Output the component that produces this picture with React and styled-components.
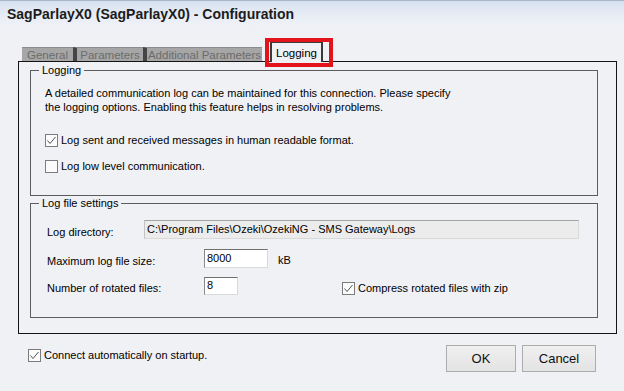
import React from 'react'
import styled, { createGlobalStyle } from 'styled-components'

const Global = createGlobalStyle`
  html, body { margin: 0; padding: 0; background: #f0f1f5; }
  body { font-family: "Liberation Sans", Arial, sans-serif; }
`;

const Window = styled.div`
  width: 624px;
  height: 391px;
  box-sizing: border-box;
  display: flex;
  flex-direction: column;
  background: #f0f1f5;
  font-family: "Liberation Sans", Arial, sans-serif;
  font-size: 11px;
  color: #000;
  overflow: hidden;
`;

const TitleBar = styled.div`
  height: 36px;
  box-sizing: border-box;
  padding: 5px 7px 0;
  border-top: 1px solid #a7b6ca;
  background: linear-gradient(#d5e0ef 0px, #e1e8f3 8px, #edf0f6 22px, #f0f1f5 34px);
  font-size: 14px;
  font-weight: bold;
  color: #1c1c1c;
  white-space: nowrap;
`;

const Client = styled.div`
  flex: 1;
  display: flex;
  flex-direction: column;
  padding: 0 7px 0 18px;
`;

const TabStrip = styled.div`
  height: 26px;
  display: flex;
  align-items: flex-end;
  padding-left: 4px;
  margin-bottom: -1px;
  position: relative;
  z-index: 1;
`;

const Tab = styled.div`
  width: ${p => p.$width}px;
  height: ${p => (p.$active ? '19px' : '13px')};
  box-sizing: content-box;
  margin-bottom: ${p => (p.$active ? '0' : '1px')};
  display: flex;
  align-items: center;
  justify-content: center;
  font-size: 11.5px;
  white-space: nowrap;
  position: relative;
  background: ${p => (p.$active ? '#f0f1f5' : '#a6a6a6')};
  color: ${p => (p.$active ? '#000' : '#6c6c6c')};
  border-top: 1px solid ${p => (p.$active ? '#3a3a3a' : '#8c8c8c')};
  border-left: ${p => (p.$active ? '2px solid #3a3a3a' : p.$first ? '0' : '4px solid #454545')};
  border-right: ${p => (p.$active ? '2px solid #3a3a3a' : '0')};
  margin-left: ${p => (p.$active ? '8px' : '0')};

  ${p => p.$highlight && `
    &::after {
      content: '';
      position: absolute;
      left: -7px;
      right: -12px;
      top: -5px;
      bottom: -5px;
      border: 4px solid #e3131c;
      pointer-events: none;
    }
  `}
`;

const Panel = styled.div`
  height: 273px;
  box-sizing: border-box;
  border: 1px solid #141414;
  padding: 8px 18px 0 11px;
  display: flex;
  flex-direction: column;
  gap: 7px;
`;

const Group = styled.div`
  height: ${p => p.$height}px;
  box-sizing: border-box;
  border: 1px solid #5c5c5c;
  position: relative;
  padding: ${p => p.$pad};
`;

const Legend = styled.span`
  position: absolute;
  top: -8px;
  left: 8px;
  padding: 0 3px;
  background: #f0f1f5;
  line-height: 14px;
`;

const Text = styled.p`
  margin: 0;
  line-height: 14px;
`;

const CheckRow = styled.label`
  display: flex;
  align-items: center;
  gap: 3px;
  margin-top: ${p => p.$top || 0}px;
  margin-left: ${p => p.$left || 0}px;
  padding-top: ${p => p.$drop || 0}px;
  line-height: 13px;
  white-space: nowrap;
`;

const Box = styled.span`
  width: 13px;
  height: 13px;
  box-sizing: border-box;
  border: 1px solid #7c7c7c;
  background: #fbfbfb;
  display: flex;
  flex-shrink: 0;
`;

const FieldRow = styled.div`
  display: flex;
  align-items: center;
  margin-top: ${p => p.$top || 0}px;
`;

const Label = styled.span`
  width: ${p => p.$width}px;
  padding-top: 5px;
  flex-shrink: 0;
`;

const Input = styled.div`
  width: ${p => p.$width}px;
  height: ${p => p.$height || 19}px;
  box-sizing: border-box;
  padding: 0 2px 2px;
  display: flex;
  align-items: center;
  background: ${p => (p.$disabled ? '#ececec' : '#fff')};
  border: 1px solid #d9d9d9;
  border-top-color: ${p => (p.$disabled ? '#a4a4a4' : '#6f6f6f')};
  border-left-color: ${p => (p.$disabled ? '#c4c4c4' : '#8a8a8a')};
  white-space: nowrap;
  font-size: 11px;
  flex-shrink: 0;
`;

const Unit = styled.span`
  margin-left: 10px;
  padding-top: 3px;
`;

const Footer = styled.div`
  display: flex;
  align-items: flex-start;
  padding: 11px 21px 0 10px;
`;

const Buttons = styled.div`
  margin-left: auto;
  display: flex;
  gap: 6px;
`;

const Button = styled.button`
  width: ${p => p.$width}px;
  height: 27px;
  box-sizing: border-box;
  border: 1px solid #acacac;
  background: linear-gradient(#f0f0f0, #e3e3e3);
  font-family: "Liberation Sans", Arial, sans-serif;
  font-size: 13px;
  color: #111;
  padding: 0;
`;

const Check = ({ checked }) => (
  <Box>
    {checked && (
      <svg width="11" height="11" viewBox="0 0 11 11">
        <polyline points="1.5,5.5 4,8.5 9.5,2" fill="none" stroke="#555" strokeWidth="1" />
      </svg>
    )}
  </Box>
);

export default function App() {
  return (
    <Window>
      <Global />
      <TitleBar>SagParlayX0 (SagParlayX0) - Configuration</TitleBar>
      <Client>
        <TabStrip>
          <Tab $first $width={51}>General</Tab>
          <Tab $width={66}>Parameters</Tab>
          <Tab $width={115}>Additional Parameters</Tab>
          <Tab $active $highlight $width={49}>Logging</Tab>
        </TabStrip>
        <Panel>
          <Group $height={126} $pad="15px 0 0 14px">
            <Legend>Logging</Legend>
            <Text>
              A detailed communication log can be maintained for this connection. Please specify<br />
              the logging options. Enabling this feature helps in resolving problems.
            </Text>
            <CheckRow $top={20}>
              <Check checked />
              Log sent and received messages in human readable format.
            </CheckRow>
            <CheckRow $top={13}>
              <Check />
              Log low level communication.
            </CheckRow>
          </Group>
          <Group $height={115} $pad="16px 0 0 16px">
            <Legend>Log file settings</Legend>
            <FieldRow>
              <Label $width={97}>Log directory:</Label>
              <Input $width={435} $disabled>C:\Program Files\Ozeki\OzekiNG - SMS Gateway\Logs</Input>
            </FieldRow>
            <FieldRow $top={10}>
              <Label $width={157}>Maximum log file size:</Label>
              <Input $width={64}>8000</Input>
              <Unit>kB</Unit>
            </FieldRow>
            <FieldRow $top={8}>
              <Label $width={157}>Number of rotated files:</Label>
              <Input $width={34} $height={18}>8</Input>
              <CheckRow $left={104} $drop={6}>
                <Check checked />
                Compress rotated files with zip
              </CheckRow>
            </FieldRow>
          </Group>
        </Panel>
        <Footer>
          <CheckRow $top={4}>
            <Check checked />
            Connect automatically on startup.
          </CheckRow>
          <Buttons>
            <Button $width={70}>OK</Button>
            <Button $width={74}>Cancel</Button>
          </Buttons>
        </Footer>
      </Client>
    </Window>
  )
}
